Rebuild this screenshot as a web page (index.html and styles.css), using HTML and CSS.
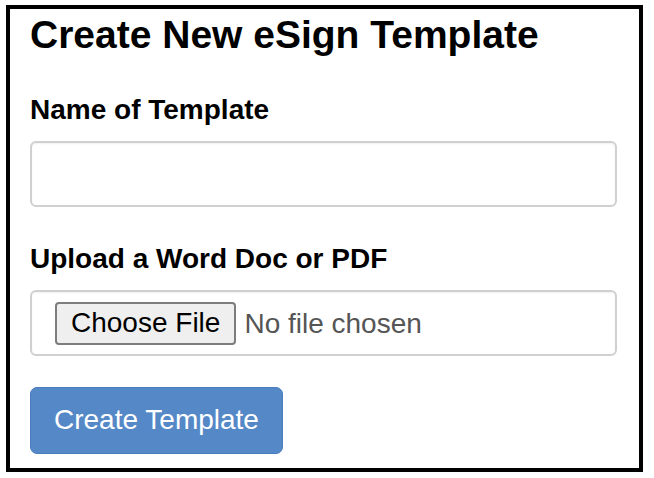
FILE: index.html
```html
<!DOCTYPE html>
<html lang="en">
<head>
  <meta charset="UTF-8">
  <meta name="viewport" content="width=device-width, initial-scale=1.0">
  <title>Create New eSign Template</title>
  <link rel="stylesheet" href="styles.css">
</head>
<body>
<div class="panel">
  <h1>Create New eSign Template</h1>
  <form id="templateForm">
    <div class="form-group">
      <label for="templateName">Name of Template</label>
      <input type="text" id="templateName" class="form-control">
    </div>

    <div class="form-group">
      <label for="templateFile">Upload a Word Doc or PDF</label>
      <input type="file" id="templateFile" class="form-control file-control" accept=".doc,.docx,.pdf">
    </div>

    <button type="submit" class="btn-primary">Create Template</button>
  </form>
</div>
</body>
</html>
```

FILE: styles.css
```css
body {
  font-family: "Liberation Sans", Arial, Helvetica, sans-serif;
  margin: 0;
  padding: 5px 0 0 6px;
  background: white;
  color: #000;
}
.panel {
  width: 637px;
  box-sizing: border-box;
  border: 4px solid #000;
  padding: 5px 22px 14px 20px;
}
h1 {
  font-size: 39px;
  line-height: 1.1;
  font-weight: bold;
  margin: 0 0 37px;
}
.form-group {
  margin-bottom: 36px;
}
label {
  display: block;
  font-size: 28px;
  font-weight: bold;
  line-height: 32px;
  margin-bottom: 15px;
}
.form-control {
  display: block;
  width: 100%;
  height: 66px;
  box-sizing: border-box;
  border: 2px solid #d0d0d0;
  border-radius: 6px;
  box-shadow: inset 0 1px 2px rgba(0,0,0,0.06);
  font-family: inherit;
  font-size: 28px;
  padding: 0 14px;
  background: white;
}
.file-control {
  padding: 10px 23px 0;
  color: #555;
}
.file-control::file-selector-button {
  font-family: inherit;
  font-size: 28px;
  color: #000;
  background: #efefef;
  border: 2px solid #7d7d7d;
  border-radius: 4px;
  height: 43px;
  padding: 0 14px;
  margin-right: 8px;
}
.btn-primary {
  display: block;
  margin-top: -5px;
  background: #5588c7;
  color: white;
  border: 1px solid #4a7dbd;
  border-radius: 7px;
  font-family: inherit;
  font-size: 28px;
  height: 67px;
  padding: 0 23px;
  cursor: pointer;
}
.btn-primary:hover {
  background: #4a7dbd;
}
```
